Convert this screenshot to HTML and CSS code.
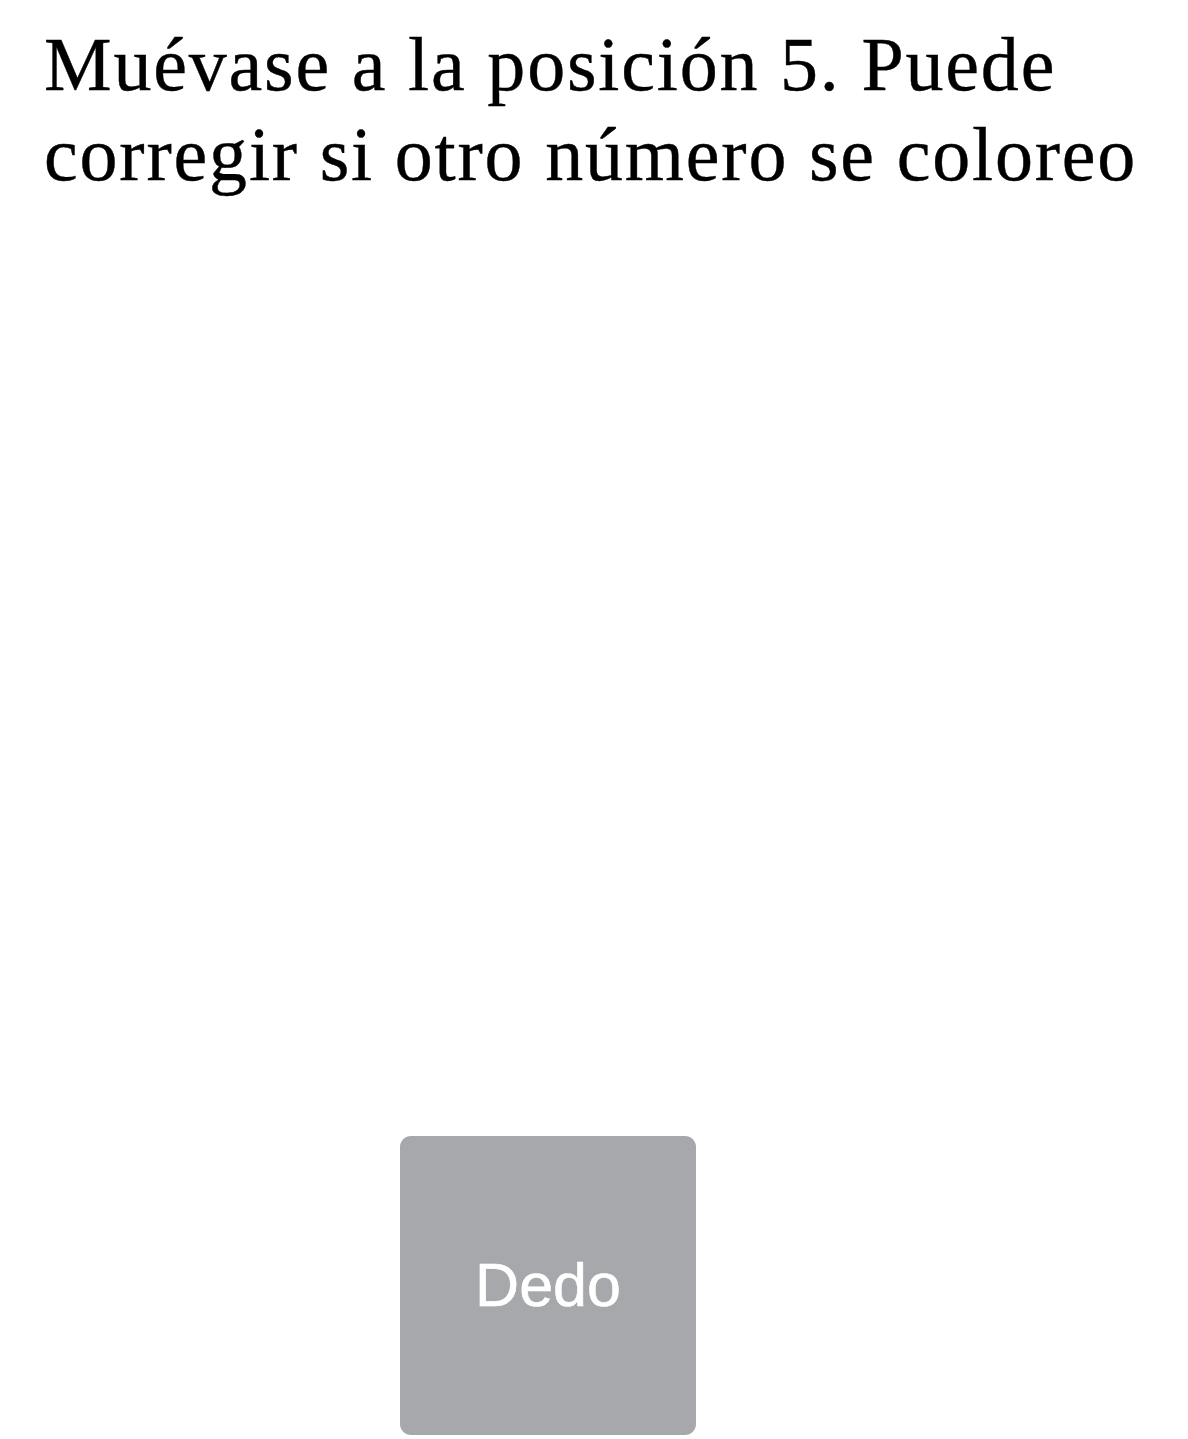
FILE: index.html
```html
<!DOCTYPE html>
<html lang="es">
<head>
<meta charset="utf-8">
<link rel="stylesheet" href="styles.css">
<title>Dedo</title>
</head>
<body>
<main class="page">
  <h1 class="prompt">Muévase a la posición 5. Puede corregir si otro número se coloreo</h1>
  <div class="actions">
    <button class="finger-btn" type="button">Dedo</button>
  </div>
</main>
</body>
</html>
```

FILE: styles.css
```css
html, body {
  margin: 0;
  padding: 0;
  background: #ffffff;
}

.page {
  width: 1188px;
  height: 1439px;
  display: flex;
  flex-direction: column;
  box-sizing: border-box;
}

.prompt {
  margin: 19px 10px 0 44px;
  font-family: "Liberation Serif", "Times New Roman", serif;
  font-weight: normal;
  font-size: 76px;
  line-height: 90px;
  letter-spacing: 1.8px;
  color: #000000;
  -webkit-text-stroke: 0.4px #000000;
}

.actions {
  margin-top: auto;
  padding: 0 0 4px 400px;
  display: flex;
}

.finger-btn {
  width: 296px;
  height: 299px;
  border: none;
  border-radius: 11px;
  background: #a7a8ac;
  color: #ffffff;
  font-family: "Liberation Sans", Arial, sans-serif;
  font-size: 61px;
  padding: 0 0 2px 0;
  display: flex;
  align-items: center;
  justify-content: center;
  -webkit-text-stroke: 0.6px #ffffff;
}
```
